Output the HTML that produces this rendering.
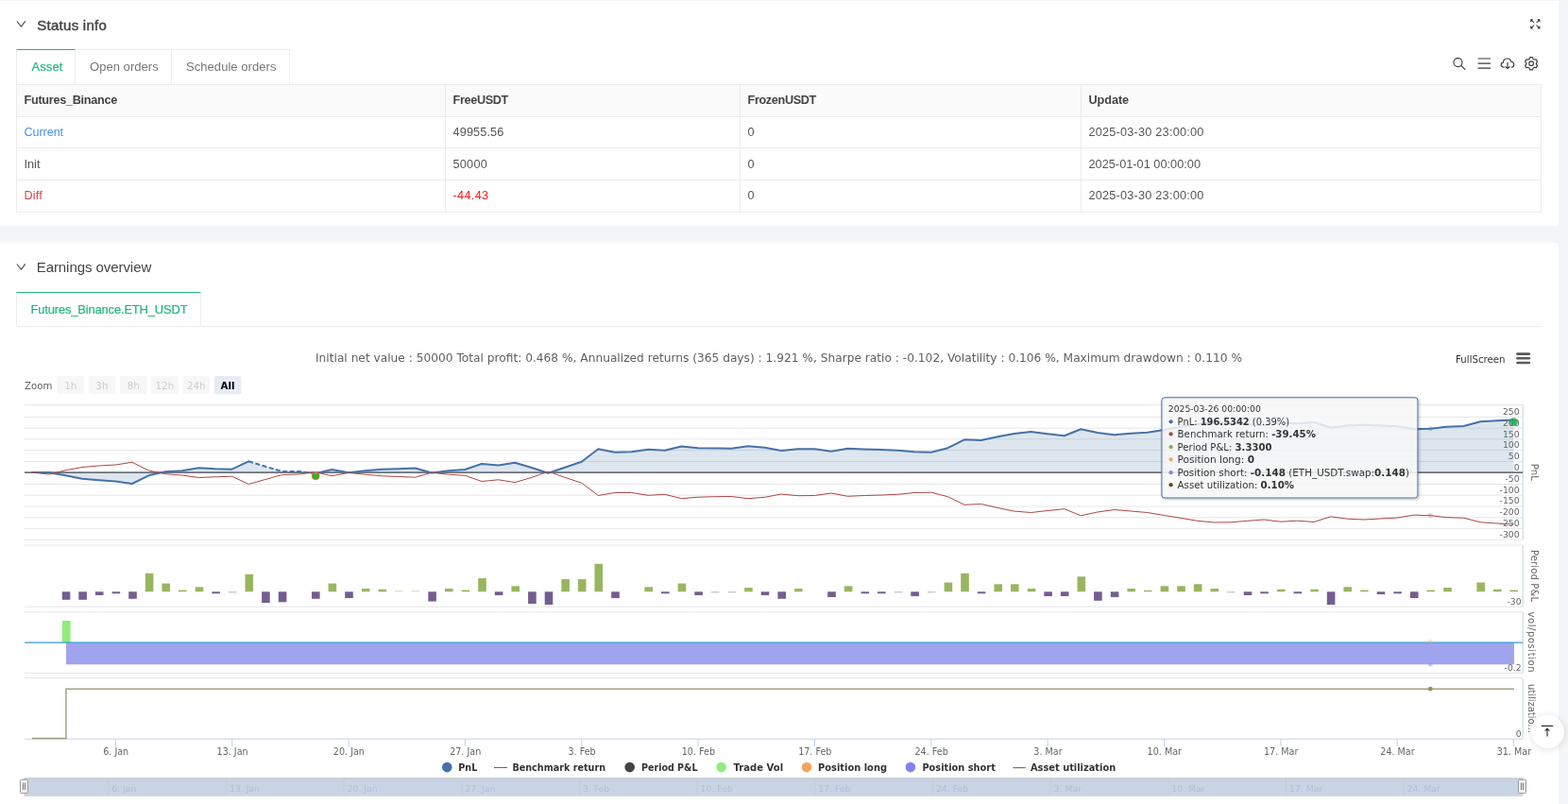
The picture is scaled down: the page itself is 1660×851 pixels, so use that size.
<!DOCTYPE html>
<html lang="en"><head><meta charset="utf-8"><title>Backtest</title>
<style>
html,body{margin:0;padding:0}
body{width:1660px;height:851px;overflow:hidden;background:#f4f5f7;font-family:"Liberation Sans", sans-serif;color:#444;position:relative}
.panel{position:absolute;left:0;width:1650px;background:#fff}
.t{position:absolute;white-space:nowrap;line-height:1}
.h{font-size:15px;font-weight:normal;color:#464646;-webkit-text-stroke:0.45px #464646}
.tab{position:absolute;box-sizing:border-box;border:1px solid #ededed;border-left:none;background:#fff;height:37.5px}
.tab.first{border-left:1px solid #ebebeb}
.tab.on{border-top:1.5px solid #1fb57a;border-bottom-color:#fff}
.tab span{position:absolute;top:10.5px;font-size:13px;color:#777;white-space:nowrap;line-height:14px}
.tab.on span{color:#22b57d;-webkit-text-stroke:0.2px #22b57d}
table{position:absolute;left:17px;top:89px;border-collapse:collapse;table-layout:fixed;width:1615px}
td,th{border:1px solid #ebebeb;font-size:12.7px;text-align:left;padding:0 0 0 7.5px;white-space:nowrap;color:#555;font-weight:normal;line-height:14px}
th{background:#fafafa;font-weight:bold;color:#444;height:32px;padding-bottom:1px}
td{height:32px}
tr.r2 td{height:33px}
tr.r3 td{height:32.5px}
svg text{font-family:"DejaVu Sans", "Liberation Sans", sans-serif}
#h1{letter-spacing:0.283px}
#tb1{letter-spacing:0.077px}
#tb2{letter-spacing:0.039px}
#tb3{letter-spacing:0.055px}
#c00{letter-spacing:-0.296px}
#c01{letter-spacing:-0.355px}
#c02{letter-spacing:-0.362px}
#c03{letter-spacing:-0.083px}
#c10{letter-spacing:-0.116px}
#c20{letter-spacing:0.016px}
#c30{letter-spacing:0.172px}
#c11{letter-spacing:0.135px}
#c21{letter-spacing:0.244px}
#c31{letter-spacing:0.336px}
#c13{letter-spacing:0.220px}
#c23{letter-spacing:0.036px}
#c33{letter-spacing:0.220px}
#h2{letter-spacing:-0.062px}
#tb4{letter-spacing:-0.188px}
</style></head><body>
<div id="root" style="position:absolute;left:0;top:0;width:1660px;height:851px;will-change:transform">
<div class="panel" style="top:1px;height:238px"></div>
<div class="panel" style="top:257px;height:600px"></div>

<svg class="t" style="left:16px;top:19px" width="13" height="13" viewBox="0 0 13 13"><path d="M1.9 3.5 L6.4 9.1 L10.8 3.4" fill="none" stroke="#444" stroke-width="1.05"/></svg>
<div class="t h" id="h1" style="left:39.2px;top:18.6px">Status info</div>

<div class="tab first on" style="left:17px;top:52px;width:63px"><span style="left:15.5px;top:11px" id="tb1">Asset</span></div>
<div class="tab" style="left:80px;top:52px;width:102px"><span style="left:15px" id="tb2">Open orders</span></div>
<div class="tab" style="left:182px;top:52px;width:125px"><span style="left:15px" id="tb3">Schedule orders</span></div>

<table>
<colgroup><col style="width:454px"><col style="width:312px"><col style="width:361px"><col style="width:487px"></colgroup>
<tr><th><span id="c00">Futures_Binance</span></th><th><span id="c01">FreeUSDT</span></th><th><span id="c02">FrozenUSDT</span></th><th><span id="c03">Update</span></th></tr>
<tr><td style="color:#4a92e6"><span id="c10">Current</span></td><td><span id="c11">49955.56</span></td><td>0</td><td><span id="c13">2025-03-30 23:00:00</span></td></tr>
<tr class="r2"><td><span id="c20">Init</span></td><td><span id="c21">50000</span></td><td>0</td><td><span id="c23">2025-01-01 00:00:00</span></td></tr>
<tr class="r3"><td style="color:#d2483f"><span id="c30">Diff</span></td><td style="color:#ff1616"><span id="c31">-44.43</span></td><td>0</td><td><span id="c33">2025-03-30 23:00:00</span></td></tr>
</table>

<svg class="t" style="left:1535px;top:14px" width="100" height="66" viewBox="1535 14 100 66" fill="none" stroke="#3a3a3a" stroke-width="1.15" stroke-linecap="round" stroke-linejoin="round">
<!-- collapse -->
<g stroke-width="1.05"><path d="M1623.8 23.8 L1620.8 20.8 M1620.7 22.6 v-1.9 h1.9"/><path d="M1626.9 23.8 L1629.9 20.8 M1628.1 20.7 h1.9 v1.9"/><path d="M1623.8 26.9 L1620.8 29.9 M1620.7 28.1 v1.9 h1.9"/><path d="M1626.9 26.9 L1629.9 29.9 M1628.1 30 h1.9 v-1.9"/></g>
<!-- search -->
<circle cx="1543.5" cy="66.1" r="4.5"/><path d="M1546.8 69.4 L1551 73.3"/>
<!-- menu -->
<path d="M1565 62 h12.6 M1565 67.1 h12.6 M1565 72.1 h12.6"/>
<!-- cloud -->
<path d="M1592.3 71.2 c-3.6 0 -4.3 -4.3 -0.9 -5.1 c0.4 -5.2 7.6 -5.4 8.4 -0.8 c4 0.3 3.8 5.4 0.4 5.9"/><path d="M1596 66.2 v6.4 M1593.9 70.6 l2.1 2.1 l2.1 -2.1"/>
<!-- gear -->
<circle cx="1621.1" cy="67.2" r="2.3"/>
<path d="M1619.7 60.6 h2.8 l0.5 1.7 l1.5 0.9 l1.7 -0.5 l1.4 2.4 l-1.2 1.3 v1.7 l1.2 1.3 l-1.4 2.4 l-1.7 -0.5 l-1.5 0.9 l-0.5 1.7 h-2.8 l-0.5 -1.7 l-1.5 -0.9 l-1.7 0.5 l-1.4 -2.4 l1.2 -1.3 v-1.7 l-1.2 -1.3 l1.4 -2.4 l1.7 0.5 l1.5 -0.9 z"/>
</svg>

<svg class="t" style="left:16px;top:275.5px" width="13" height="13" viewBox="0 0 13 13"><path d="M1.9 3.5 L6.4 9.1 L10.8 3.4" fill="none" stroke="#444" stroke-width="1.05"/></svg>
<div class="t h" id="h2" style="left:38.7px;top:275.2px;font-weight:normal;color:#444;-webkit-text-stroke:0">Earnings overview</div>
<div style="position:absolute;left:17px;top:345px;width:1615px;height:1px;background:#ebebeb"></div>
<div class="tab first on" style="left:17px;top:308.5px;width:196px;height:37.5px;border-bottom-color:#ebebeb"><span style="left:14.5px;top:11px" id="tb4">Futures_Binance.ETH_USDT</span></div>

<svg class="t" style="left:0;top:0;will-change:transform" width="1660" height="851" viewBox="0 0 1660 851">
<line x1="26" x2="1612" y1="428.5" y2="428.5" stroke="#e6e6e6" stroke-width="1"/>
<line x1="26" x2="1612" y1="441.4" y2="441.4" stroke="#e6e6e6" stroke-width="1"/>
<line x1="26" x2="1612" y1="453.2" y2="453.2" stroke="#e6e6e6" stroke-width="1"/>
<line x1="26" x2="1612" y1="464.8" y2="464.8" stroke="#e6e6e6" stroke-width="1"/>
<line x1="26" x2="1612" y1="476.6" y2="476.6" stroke="#e6e6e6" stroke-width="1"/>
<line x1="26" x2="1612" y1="488.5" y2="488.5" stroke="#e6e6e6" stroke-width="1"/>
<line x1="26" x2="1612" y1="512.5" y2="512.5" stroke="#e6e6e6" stroke-width="1"/>
<line x1="26" x2="1612" y1="524.2" y2="524.2" stroke="#e6e6e6" stroke-width="1"/>
<line x1="26" x2="1612" y1="536.0" y2="536.0" stroke="#e6e6e6" stroke-width="1"/>
<line x1="26" x2="1612" y1="547.8" y2="547.8" stroke="#e6e6e6" stroke-width="1"/>
<line x1="26" x2="1612" y1="559.5" y2="559.5" stroke="#e6e6e6" stroke-width="1"/>
<line x1="26" x2="1612" y1="571.3" y2="571.3" stroke="#e6e6e6" stroke-width="1"/>
<line x1="26" x2="1612" y1="577" y2="577" stroke="#e6e6e6" stroke-width="1"/>
<line x1="26" x2="1612" y1="642.25" y2="642.25" stroke="#e6e6e6" stroke-width="1"/>
<line x1="26" x2="1612" y1="647.75" y2="647.75" stroke="#e6e6e6" stroke-width="1"/>
<line x1="26" x2="1612" y1="712.6" y2="712.6" stroke="#e6e6e6" stroke-width="1"/>
<line x1="26" x2="1612" y1="717.6" y2="717.6" stroke="#e6e6e6" stroke-width="1"/>
<line x1="1612.2" x2="1612.2" y1="428.5" y2="571" stroke="#c4cfe9" stroke-width="1"/>
<line x1="1612.2" x2="1612.2" y1="577" y2="642.25" stroke="#c4cfe9" stroke-width="1"/>
<line x1="1612.2" x2="1612.2" y1="647.75" y2="712.6" stroke="#c4cfe9" stroke-width="1"/>
<line x1="1612.2" x2="1612.2" y1="717.6" y2="782" stroke="#c4cfe9" stroke-width="1"/>
<line x1="26" x2="1612" y1="782.2" y2="782.2" stroke="#c4cfe9" stroke-width="1"/>
<line x1="122.4" x2="122.4" y1="782.2" y2="790.2" stroke="#c4cfe9" stroke-width="1"/>
<text x="122.7" y="799.0" text-anchor="middle" font-size="9.6" fill="#666">6. Jan</text>
<line x1="245.8" x2="245.8" y1="782.2" y2="790.2" stroke="#c4cfe9" stroke-width="1"/>
<text x="246.1" y="799.0" text-anchor="middle" font-size="9.6" fill="#666">13. Jan</text>
<line x1="369.1" x2="369.1" y1="782.2" y2="790.2" stroke="#c4cfe9" stroke-width="1"/>
<text x="369.4" y="799.0" text-anchor="middle" font-size="9.6" fill="#666">20. Jan</text>
<line x1="492.4" x2="492.4" y1="782.2" y2="790.2" stroke="#c4cfe9" stroke-width="1"/>
<text x="492.7" y="799.0" text-anchor="middle" font-size="9.6" fill="#666">27. Jan</text>
<line x1="615.8" x2="615.8" y1="782.2" y2="790.2" stroke="#c4cfe9" stroke-width="1"/>
<text x="616.1" y="799.0" text-anchor="middle" font-size="9.6" fill="#666">3. Feb</text>
<line x1="739.1" x2="739.1" y1="782.2" y2="790.2" stroke="#c4cfe9" stroke-width="1"/>
<text x="739.4" y="799.0" text-anchor="middle" font-size="9.6" fill="#666">10. Feb</text>
<line x1="862.5" x2="862.5" y1="782.2" y2="790.2" stroke="#c4cfe9" stroke-width="1"/>
<text x="862.8" y="799.0" text-anchor="middle" font-size="9.6" fill="#666">17. Feb</text>
<line x1="985.8" x2="985.8" y1="782.2" y2="790.2" stroke="#c4cfe9" stroke-width="1"/>
<text x="986.1" y="799.0" text-anchor="middle" font-size="9.6" fill="#666">24. Feb</text>
<line x1="1109.2" x2="1109.2" y1="782.2" y2="790.2" stroke="#c4cfe9" stroke-width="1"/>
<text x="1109.5" y="799.0" text-anchor="middle" font-size="9.6" fill="#666">3. Mar</text>
<line x1="1232.5" x2="1232.5" y1="782.2" y2="790.2" stroke="#c4cfe9" stroke-width="1"/>
<text x="1232.8" y="799.0" text-anchor="middle" font-size="9.6" fill="#666">10. Mar</text>
<line x1="1355.9" x2="1355.9" y1="782.2" y2="790.2" stroke="#c4cfe9" stroke-width="1"/>
<text x="1356.2" y="799.0" text-anchor="middle" font-size="9.6" fill="#666">17. Mar</text>
<line x1="1479.2" x2="1479.2" y1="782.2" y2="790.2" stroke="#c4cfe9" stroke-width="1"/>
<text x="1479.5" y="799.0" text-anchor="middle" font-size="9.6" fill="#666">24. Mar</text>
<line x1="1602.6" x2="1602.6" y1="782.2" y2="790.2" stroke="#c4cfe9" stroke-width="1"/>
<text x="1602.9" y="799.0" text-anchor="middle" font-size="9.6" fill="#666">31. Mar</text>
<line x1="26" x2="1612" y1="500.1" y2="500.1" stroke="#6f7276" stroke-width="1.9"/>
<path d="M34.1 500.0 L51.8 500.2 L69.4 503.3 L87.0 506.8 L104.6 508.3 L122.3 509.5 L139.9 512.0 L157.5 503.3 L175.1 499.2 L192.7 498.3 L210.4 495.3 L228.0 496.2 L245.6 496.7 L263.2 488.3 L280.9 493.8 L298.5 498.9 L316.1 498.9 L333.7 501.2 L351.3 497.0 L369.0 500.3 L386.6 498.3 L404.2 496.8 L421.8 496.2 L439.5 495.5 L457.1 500.5 L474.7 498.3 L492.3 497.0 L509.9 491.0 L527.6 492.5 L545.2 489.8 L562.8 495.0 L580.4 500.8 L598.1 494.7 L615.7 488.8 L633.3 475.3 L650.9 478.7 L668.5 478.3 L686.2 475.7 L703.8 476.8 L721.4 472.5 L739.0 474.3 L756.7 474.5 L774.3 474.7 L791.9 472.3 L809.5 473.8 L827.1 477.0 L844.8 475.2 L862.4 475.3 L880.0 477.7 L897.6 474.7 L915.2 475.5 L932.9 476.0 L950.5 476.7 L968.1 478.3 L985.7 478.7 L1003.4 474.2 L1021.0 465.3 L1038.6 466.0 L1056.2 462.3 L1073.8 459.0 L1091.5 457.0 L1109.1 459.2 L1126.7 461.2 L1144.3 454.2 L1162.0 458.0 L1179.6 460.3 L1197.2 458.8 L1214.8 457.7 L1232.4 455.0 L1250.1 451.8 L1267.7 449.0 L1285.3 447.3 L1302.9 447.5 L1320.6 449.0 L1338.2 450.3 L1355.8 447.5 L1373.4 448.3 L1391.0 446.7 L1408.7 452.7 L1426.3 450.5 L1443.9 449.7 L1461.5 450.5 L1479.2 451.3 L1496.8 454.3 L1514.4 453.7 L1532.0 451.7 L1549.6 451.0 L1567.3 446.3 L1584.9 445.3 L1602.5 444.5 L1602.5 500 L34 500 Z" fill="#4572A7" fill-opacity="0.18"/>
<path d="M34.1 500.0 L51.8 500.2 L69.4 503.3 L87.0 506.8 L104.6 508.3 L122.3 509.5 L139.9 512.0 L157.5 503.3 L175.1 499.2 L192.7 498.3 L210.4 495.3 L228.0 496.2 L245.6 496.7 L263.2 488.3" fill="none" stroke="#4572A7" stroke-width="2" stroke-linejoin="round" stroke-linecap="round"/>
<path d="M263.2 488.3 L280.9 493.8 L298.5 498.9 L316.1 498.9 L333.7 501.2" fill="none" stroke="#4572A7" stroke-width="2" stroke-dasharray="5 2.5"/>
<path d="M333.7 501.2 L351.3 497.0 L369.0 500.3 L386.6 498.3 L404.2 496.8 L421.8 496.2 L439.5 495.5 L457.1 500.5 L474.7 498.3 L492.3 497.0 L509.9 491.0 L527.6 492.5 L545.2 489.8 L562.8 495.0 L580.4 500.8 L598.1 494.7 L615.7 488.8 L633.3 475.3 L650.9 478.7 L668.5 478.3 L686.2 475.7 L703.8 476.8 L721.4 472.5 L739.0 474.3 L756.7 474.5 L774.3 474.7 L791.9 472.3 L809.5 473.8 L827.1 477.0 L844.8 475.2 L862.4 475.3 L880.0 477.7 L897.6 474.7 L915.2 475.5 L932.9 476.0 L950.5 476.7 L968.1 478.3 L985.7 478.7 L1003.4 474.2 L1021.0 465.3 L1038.6 466.0 L1056.2 462.3 L1073.8 459.0 L1091.5 457.0 L1109.1 459.2 L1126.7 461.2 L1144.3 454.2 L1162.0 458.0 L1179.6 460.3 L1197.2 458.8 L1214.8 457.7 L1232.4 455.0 L1250.1 451.8 L1267.7 449.0 L1285.3 447.3 L1302.9 447.5 L1320.6 449.0 L1338.2 450.3 L1355.8 447.5 L1373.4 448.3 L1391.0 446.7 L1408.7 452.7 L1426.3 450.5 L1443.9 449.7 L1461.5 450.5 L1479.2 451.3 L1496.8 454.3 L1514.4 453.7 L1532.0 451.7 L1549.6 451.0 L1567.3 446.3 L1584.9 445.3 L1602.5 444.5" fill="none" stroke="#4572A7" stroke-width="2" stroke-linejoin="round" stroke-linecap="round"/>
<path d="M34.1 500.0 L51.8 502.0 L69.4 497.8 L87.0 494.5 L104.6 493.0 L122.3 492.0 L139.9 489.3 L157.5 498.0 L175.1 501.7 L192.7 503.0 L210.4 505.5 L228.0 504.8 L245.6 504.2 L263.2 512.5 L280.9 507.5 L298.5 502.6 L316.1 502.0 L333.7 499.8 L351.3 503.7 L369.0 500.5 L386.6 502.2 L404.2 503.8 L421.8 504.5 L439.5 505.2 L457.1 500.3 L474.7 502.2 L492.3 503.3 L509.9 509.5 L527.6 507.8 L545.2 510.6 L562.8 505.4 L580.4 499.2 L598.1 505.3 L615.7 511.2 L633.3 524.5 L650.9 521.5 L668.5 521.5 L686.2 524.3 L703.8 523.3 L721.4 527.7 L739.0 526.2 L756.7 525.7 L774.3 525.5 L791.9 527.7 L809.5 526.3 L827.1 523.0 L844.8 524.7 L862.4 524.5 L880.0 522.0 L897.6 525.3 L915.2 524.5 L932.9 524.0 L950.5 523.3 L968.1 521.5 L985.7 521.2 L1003.4 525.7 L1021.0 534.3 L1038.6 533.5 L1056.2 537.5 L1073.8 541.1 L1091.5 542.5 L1109.1 540.5 L1126.7 538.7 L1144.3 545.8 L1162.0 542.0 L1179.6 539.5 L1197.2 541.0 L1214.8 542.5 L1232.4 545.5 L1250.1 548.3 L1267.7 551.3 L1285.3 553.0 L1302.9 552.8 L1320.6 551.3 L1338.2 550.0 L1355.8 552.2 L1373.4 551.2 L1391.0 552.5 L1408.7 546.8 L1426.3 549.2 L1443.9 550.0 L1461.5 549.0 L1479.2 548.0 L1496.8 545.2 L1514.4 545.7 L1532.0 547.7 L1549.6 548.2 L1567.3 552.8 L1584.9 554.0 L1602.5 555.0" fill="none" stroke="#AA4643" stroke-width="1" stroke-linejoin="round"/>
<circle cx="334.2" cy="503.8" r="4.6" fill="#f58a78" fill-opacity="0.35"/>
<circle cx="334.2" cy="503.8" r="3.9" fill="#0fbf12" stroke="#e8795c" stroke-width="0.7"/>
<path d="M334.3 500.6 L334.3 507.4" stroke="#e8734e" stroke-width="0.8" fill="none"/><path d="M334.3 500.8 L334.3 502.8" stroke="#f0704e" stroke-width="1.5" stroke-linecap="round" fill="none"/>
<text x="1608.7" y="439.1" text-anchor="end" font-size="9.3" fill="#666">250</text>
<text x="1608.7" y="450.9" text-anchor="end" font-size="9.3" fill="#666">200</text>
<text x="1608.7" y="462.6" text-anchor="end" font-size="9.3" fill="#666">150</text>
<text x="1608.7" y="474.4" text-anchor="end" font-size="9.3" fill="#666">100</text>
<text x="1608.7" y="486.2" text-anchor="end" font-size="9.3" fill="#666">50</text>
<text x="1608.7" y="497.9" text-anchor="end" font-size="9.3" fill="#666">0</text>
<text x="1608.7" y="509.7" text-anchor="end" font-size="9.3" fill="#666">-50</text>
<text x="1608.7" y="521.5" text-anchor="end" font-size="9.3" fill="#666">-100</text>
<text x="1608.7" y="533.2" text-anchor="end" font-size="9.3" fill="#666">-150</text>
<text x="1608.7" y="545.0" text-anchor="end" font-size="9.3" fill="#666">-200</text>
<text x="1608.7" y="556.8" text-anchor="end" font-size="9.3" fill="#666">-250</text>
<text x="1608.7" y="568.6" text-anchor="end" font-size="9.3" fill="#666">-300</text>
<circle cx="1602.5" cy="446.6" r="4.4" fill="#19a84a" fill-opacity="0.78"/>
<text transform="translate(1620.5 499.8) rotate(90)" text-anchor="middle" font-size="10" fill="#666" textLength="18" lengthAdjust="spacingAndGlyphs">PnL</text>
<rect x="65.7" y="626.30" width="8.6" height="8.50" fill="#755d90" fill-opacity="1"/>
<rect x="83.3" y="626.30" width="8.6" height="8.50" fill="#755d90" fill-opacity="1"/>
<rect x="100.9" y="626.30" width="8.6" height="3.75" fill="#755d90" fill-opacity="1"/>
<rect x="118.6" y="626.30" width="8.6" height="2.00" fill="#755d90" fill-opacity="1"/>
<rect x="136.2" y="626.30" width="8.6" height="7.50" fill="#755d90" fill-opacity="1"/>
<rect x="153.8" y="606.80" width="8.6" height="19.50" fill="#98b660" fill-opacity="1"/>
<rect x="171.4" y="617.55" width="8.6" height="8.75" fill="#98b660" fill-opacity="1"/>
<rect x="189.0" y="624.55" width="8.6" height="1.75" fill="#98b660" fill-opacity="1"/>
<rect x="206.7" y="621.30" width="8.6" height="5.00" fill="#98b660" fill-opacity="1"/>
<rect x="224.3" y="626.30" width="8.6" height="2.00" fill="#755d90" fill-opacity="1"/>
<rect x="241.9" y="626.30" width="8.6" height="1.00" fill="#755d90" fill-opacity="0.5"/>
<rect x="259.5" y="607.80" width="8.6" height="18.50" fill="#98b660" fill-opacity="1"/>
<rect x="277.1" y="626.30" width="8.6" height="11.75" fill="#755d90" fill-opacity="1"/>
<rect x="294.8" y="626.30" width="8.6" height="11.00" fill="#755d90" fill-opacity="1"/>
<rect x="330.0" y="626.30" width="8.6" height="7.50" fill="#755d90" fill-opacity="1"/>
<rect x="347.6" y="617.55" width="8.6" height="8.75" fill="#98b660" fill-opacity="1"/>
<rect x="365.2" y="626.30" width="8.6" height="6.75" fill="#755d90" fill-opacity="1"/>
<rect x="382.9" y="623.05" width="8.6" height="3.25" fill="#98b660" fill-opacity="1"/>
<rect x="400.5" y="623.80" width="8.6" height="2.50" fill="#98b660" fill-opacity="1"/>
<rect x="418.1" y="625.30" width="8.6" height="1.00" fill="#98b660" fill-opacity="0.5"/>
<rect x="435.7" y="625.30" width="8.6" height="1.00" fill="#98b660" fill-opacity="0.5"/>
<rect x="453.3" y="626.30" width="8.6" height="10.25" fill="#755d90" fill-opacity="1"/>
<rect x="471.0" y="623.05" width="8.6" height="3.25" fill="#98b660" fill-opacity="1"/>
<rect x="488.6" y="624.55" width="8.6" height="1.75" fill="#98b660" fill-opacity="1"/>
<rect x="506.2" y="612.05" width="8.6" height="14.25" fill="#98b660" fill-opacity="1"/>
<rect x="523.8" y="626.30" width="8.6" height="3.75" fill="#755d90" fill-opacity="1"/>
<rect x="541.4" y="620.30" width="8.6" height="6.00" fill="#98b660" fill-opacity="1"/>
<rect x="559.1" y="626.30" width="8.6" height="12.75" fill="#755d90" fill-opacity="1"/>
<rect x="576.7" y="626.30" width="8.6" height="13.75" fill="#755d90" fill-opacity="1"/>
<rect x="594.3" y="613.05" width="8.6" height="13.25" fill="#98b660" fill-opacity="1"/>
<rect x="611.9" y="613.05" width="8.6" height="13.25" fill="#98b660" fill-opacity="1"/>
<rect x="629.5" y="596.80" width="8.6" height="29.50" fill="#98b660" fill-opacity="1"/>
<rect x="647.2" y="626.30" width="8.6" height="6.75" fill="#755d90" fill-opacity="1"/>
<rect x="682.4" y="621.30" width="8.6" height="5.00" fill="#98b660" fill-opacity="1"/>
<rect x="700.0" y="626.30" width="8.6" height="2.00" fill="#755d90" fill-opacity="1"/>
<rect x="717.6" y="617.55" width="8.6" height="8.75" fill="#98b660" fill-opacity="1"/>
<rect x="735.3" y="626.30" width="8.6" height="3.75" fill="#755d90" fill-opacity="1"/>
<rect x="752.9" y="626.30" width="8.6" height="1.00" fill="#755d90" fill-opacity="0.5"/>
<rect x="770.5" y="626.30" width="8.6" height="1.00" fill="#755d90" fill-opacity="0.5"/>
<rect x="788.1" y="622.05" width="8.6" height="4.25" fill="#98b660" fill-opacity="1"/>
<rect x="805.7" y="626.30" width="8.6" height="3.75" fill="#755d90" fill-opacity="1"/>
<rect x="823.4" y="626.30" width="8.6" height="7.50" fill="#755d90" fill-opacity="1"/>
<rect x="841.0" y="623.05" width="8.6" height="3.25" fill="#98b660" fill-opacity="1"/>
<rect x="876.2" y="626.30" width="8.6" height="5.75" fill="#755d90" fill-opacity="1"/>
<rect x="893.8" y="620.30" width="8.6" height="6.00" fill="#98b660" fill-opacity="1"/>
<rect x="911.5" y="626.30" width="8.6" height="2.00" fill="#755d90" fill-opacity="1"/>
<rect x="929.1" y="626.30" width="8.6" height="2.00" fill="#755d90" fill-opacity="1"/>
<rect x="946.7" y="626.30" width="8.6" height="1.00" fill="#755d90" fill-opacity="0.5"/>
<rect x="964.3" y="626.30" width="8.6" height="4.75" fill="#755d90" fill-opacity="1"/>
<rect x="981.9" y="626.30" width="8.6" height="1.00" fill="#755d90" fill-opacity="0.5"/>
<rect x="999.6" y="616.55" width="8.6" height="9.75" fill="#98b660" fill-opacity="1"/>
<rect x="1017.2" y="606.80" width="8.6" height="19.50" fill="#98b660" fill-opacity="1"/>
<rect x="1034.8" y="626.30" width="8.6" height="2.00" fill="#755d90" fill-opacity="1"/>
<rect x="1052.4" y="618.30" width="8.6" height="8.00" fill="#98b660" fill-opacity="1"/>
<rect x="1070.0" y="618.30" width="8.6" height="8.00" fill="#98b660" fill-opacity="1"/>
<rect x="1087.7" y="623.05" width="8.6" height="3.25" fill="#98b660" fill-opacity="1"/>
<rect x="1105.3" y="626.30" width="8.6" height="4.75" fill="#755d90" fill-opacity="1"/>
<rect x="1122.9" y="626.30" width="8.6" height="4.75" fill="#755d90" fill-opacity="1"/>
<rect x="1140.5" y="610.30" width="8.6" height="16.00" fill="#98b660" fill-opacity="1"/>
<rect x="1158.1" y="626.30" width="8.6" height="9.50" fill="#755d90" fill-opacity="1"/>
<rect x="1175.8" y="626.30" width="8.6" height="5.75" fill="#755d90" fill-opacity="1"/>
<rect x="1193.4" y="623.05" width="8.6" height="3.25" fill="#98b660" fill-opacity="1"/>
<rect x="1211.0" y="624.80" width="8.6" height="1.50" fill="#98b660" fill-opacity="1"/>
<rect x="1228.6" y="620.30" width="8.6" height="6.00" fill="#98b660" fill-opacity="1"/>
<rect x="1246.2" y="620.30" width="8.6" height="6.00" fill="#98b660" fill-opacity="1"/>
<rect x="1263.9" y="618.30" width="8.6" height="8.00" fill="#98b660" fill-opacity="1"/>
<rect x="1281.5" y="623.05" width="8.6" height="3.25" fill="#98b660" fill-opacity="1"/>
<rect x="1299.1" y="626.30" width="8.6" height="1.00" fill="#755d90" fill-opacity="0.5"/>
<rect x="1316.7" y="626.30" width="8.6" height="3.75" fill="#755d90" fill-opacity="1"/>
<rect x="1334.3" y="626.30" width="8.6" height="2.00" fill="#755d90" fill-opacity="1"/>
<rect x="1352.0" y="623.80" width="8.6" height="2.50" fill="#98b660" fill-opacity="1"/>
<rect x="1369.6" y="626.30" width="8.6" height="2.00" fill="#755d90" fill-opacity="1"/>
<rect x="1387.2" y="623.80" width="8.6" height="2.50" fill="#98b660" fill-opacity="1"/>
<rect x="1404.8" y="626.30" width="8.6" height="13.75" fill="#755d90" fill-opacity="1"/>
<rect x="1422.4" y="621.30" width="8.6" height="5.00" fill="#98b660" fill-opacity="1"/>
<rect x="1440.1" y="624.55" width="8.6" height="1.75" fill="#98b660" fill-opacity="1"/>
<rect x="1457.7" y="626.30" width="8.6" height="2.75" fill="#755d90" fill-opacity="1"/>
<rect x="1475.3" y="626.30" width="8.6" height="2.00" fill="#755d90" fill-opacity="1"/>
<rect x="1492.9" y="626.30" width="8.6" height="6.75" fill="#755d90" fill-opacity="1"/>
<rect x="1510.5" y="624.55" width="8.6" height="1.75" fill="#98b660" fill-opacity="1"/>
<rect x="1528.2" y="622.05" width="8.6" height="4.25" fill="#98b660" fill-opacity="1"/>
<rect x="1563.4" y="616.55" width="8.6" height="9.75" fill="#98b660" fill-opacity="1"/>
<rect x="1581.0" y="623.80" width="8.6" height="2.50" fill="#98b660" fill-opacity="1"/>
<rect x="1598.6" y="624.55" width="8.4" height="1.75" fill="#98b660" fill-opacity="1"/>
<text x="1610.7" y="640.4" text-anchor="end" font-size="9.3" fill="#666">-30</text>
<text transform="translate(1620.5 609.5) rotate(90)" text-anchor="middle" font-size="10" fill="#666" textLength="55" lengthAdjust="spacing">Period P&amp;L</text>
<rect x="65.8" y="657" width="8.8" height="23" fill="#90ed7d"/>
<rect x="70" y="680.3" width="1533" height="23" fill="#8085e9" fill-opacity="0.75"/>
<line x1="26" x2="1612" y1="680.1" y2="680.1" stroke="#3597d6" stroke-width="1.2"/>
<text x="1610.7" y="710.3" text-anchor="end" font-size="9.3" fill="#666">-0.2</text>
<text transform="translate(1617.6 679.5) rotate(90)" text-anchor="middle" font-size="10" fill="#666" textLength="64" lengthAdjust="spacing">vol/position</text>
<path d="M34 781.6 L69.95 781.6 L69.95 729.15 L1603 729.15" fill="none" stroke="#7f7848" stroke-opacity="0.7" stroke-width="1.5"/>
<text x="1610.7" y="779.5" text-anchor="end" font-size="9.3" fill="#666">0</text>
<text transform="translate(1617.6 750) rotate(90)" text-anchor="middle" font-size="10" fill="#666" textLength="52" lengthAdjust="spacing">utilizatio...</text>
<circle cx="1514.3" cy="453.7" r="2.6" fill="#4572A7" fill-opacity="0.25"/>
<circle cx="1514.3" cy="545.6" r="2.6" fill="#AA4643" fill-opacity="0.25"/>
<circle cx="1514.3" cy="679.3" r="2.4" fill="#f7a35c" fill-opacity="0.35"/>
<circle cx="1514.3" cy="703.3" r="2.4" fill="#8085e9" fill-opacity="0.4"/>
<circle cx="1514.3" cy="729.15" r="2.4" fill="#9a9066"/>
<circle cx="473.3" cy="812.1" r="5.3" fill="#4572A7"/>
<text x="485.3" y="815.7" font-size="9.6" font-weight="bold" fill="#333" textLength="20" lengthAdjust="spacingAndGlyphs">PnL</text>
<line x1="523" x2="537" y1="812.5" y2="812.5" stroke="#AA4643" stroke-width="1"/>
<text x="542.4" y="815.7" font-size="9.6" font-weight="bold" fill="#333" textLength="98.6" lengthAdjust="spacingAndGlyphs">Benchmark return</text>
<circle cx="666.7" cy="812.1" r="5.3" fill="#434348"/>
<text x="679" y="815.7" font-size="9.6" font-weight="bold" fill="#333" textLength="59.5" lengthAdjust="spacingAndGlyphs">Period P&amp;L</text>
<circle cx="763.6" cy="812.1" r="5.3" fill="#90ed7d"/>
<text x="776.6" y="815.7" font-size="9.6" font-weight="bold" fill="#333" textLength="52.5" lengthAdjust="spacingAndGlyphs">Trade Vol</text>
<circle cx="854" cy="812.1" r="5.3" fill="#f7a35c"/>
<text x="866" y="815.7" font-size="9.6" font-weight="bold" fill="#333" textLength="73" lengthAdjust="spacingAndGlyphs">Position long</text>
<circle cx="963.9" cy="812.1" r="5.3" fill="#8085e9"/>
<text x="976.4" y="815.7" font-size="9.6" font-weight="bold" fill="#333" textLength="77.5" lengthAdjust="spacingAndGlyphs">Position short</text>
<line x1="1072.3" x2="1085.8" y1="812.55" y2="812.55" stroke="#8a7a3c" stroke-width="1.3"/>
<text x="1091" y="815.7" font-size="9.6" font-weight="bold" fill="#333" textLength="90.2" lengthAdjust="spacingAndGlyphs">Asset utilization</text>
<rect x="25.5" y="823.3" width="1586.7" height="18.6" fill="#c8d4e4"/>
<line x1="25.5" x2="1612.2" y1="842.3" y2="842.3" stroke="#d4d6da" stroke-width="1.2"/>
<line x1="25.5" x2="1612.2" y1="823.8" y2="823.8" stroke="#c9ccd2" stroke-width="1.2"/>
<line x1="114.8" x2="114.8" y1="824.4" y2="841.7" stroke="#bfcadb" stroke-opacity="0.8" stroke-width="1"/>
<text x="118.2" y="837.8" font-size="9.3" fill="#b3c0d2">6. Jan</text>
<line x1="239.5" x2="239.5" y1="824.4" y2="841.7" stroke="#bfcadb" stroke-opacity="0.8" stroke-width="1"/>
<text x="242.9" y="837.8" font-size="9.3" fill="#b3c0d2">13. Jan</text>
<line x1="364.2" x2="364.2" y1="824.4" y2="841.7" stroke="#bfcadb" stroke-opacity="0.8" stroke-width="1"/>
<text x="367.6" y="837.8" font-size="9.3" fill="#b3c0d2">20. Jan</text>
<line x1="488.9" x2="488.9" y1="824.4" y2="841.7" stroke="#bfcadb" stroke-opacity="0.8" stroke-width="1"/>
<text x="492.3" y="837.8" font-size="9.3" fill="#b3c0d2">27. Jan</text>
<line x1="613.5" x2="613.5" y1="824.4" y2="841.7" stroke="#bfcadb" stroke-opacity="0.8" stroke-width="1"/>
<text x="616.9" y="837.8" font-size="9.3" fill="#b3c0d2">3. Feb</text>
<line x1="738.2" x2="738.2" y1="824.4" y2="841.7" stroke="#bfcadb" stroke-opacity="0.8" stroke-width="1"/>
<text x="741.6" y="837.8" font-size="9.3" fill="#b3c0d2">10. Feb</text>
<line x1="862.9" x2="862.9" y1="824.4" y2="841.7" stroke="#bfcadb" stroke-opacity="0.8" stroke-width="1"/>
<text x="866.3" y="837.8" font-size="9.3" fill="#b3c0d2">17. Feb</text>
<line x1="987.5" x2="987.5" y1="824.4" y2="841.7" stroke="#bfcadb" stroke-opacity="0.8" stroke-width="1"/>
<text x="990.9" y="837.8" font-size="9.3" fill="#b3c0d2">24. Feb</text>
<line x1="1112.2" x2="1112.2" y1="824.4" y2="841.7" stroke="#bfcadb" stroke-opacity="0.8" stroke-width="1"/>
<text x="1115.6" y="837.8" font-size="9.3" fill="#b3c0d2">3. Mar</text>
<line x1="1236.9" x2="1236.9" y1="824.4" y2="841.7" stroke="#bfcadb" stroke-opacity="0.8" stroke-width="1"/>
<text x="1240.3" y="837.8" font-size="9.3" fill="#b3c0d2">10. Mar</text>
<line x1="1361.5" x2="1361.5" y1="824.4" y2="841.7" stroke="#bfcadb" stroke-opacity="0.8" stroke-width="1"/>
<text x="1365.0" y="837.8" font-size="9.3" fill="#b3c0d2">17. Mar</text>
<line x1="1486.2" x2="1486.2" y1="824.4" y2="841.7" stroke="#bfcadb" stroke-opacity="0.8" stroke-width="1"/>
<text x="1489.6" y="837.8" font-size="9.3" fill="#b3c0d2">24. Mar</text>
<rect x="21.4" y="825.2" width="8" height="14.4" rx="1" fill="#f2f2f2" stroke="#999" stroke-width="1"/>
<line x1="24.4" x2="24.4" y1="828.6" y2="836" stroke="#555" stroke-width="0.8"/>
<line x1="26.4" x2="26.4" y1="828.6" y2="836" stroke="#555" stroke-width="0.8"/>
<rect x="1607.5" y="825.2" width="8" height="14.4" rx="1" fill="#f2f2f2" stroke="#999" stroke-width="1"/>
<line x1="1610.5" x2="1610.5" y1="828.6" y2="836" stroke="#555" stroke-width="0.8"/>
<line x1="1612.5" x2="1612.5" y1="828.6" y2="836" stroke="#555" stroke-width="0.8"/>
<text x="334" y="383" font-size="11.6" fill="#5e5e5e" textLength="981" lengthAdjust="spacingAndGlyphs">Initial net value : 50000 Total profit: 0.468 %, Annualized returns (365 days) : 1.921 %, Sharpe ratio : -0.102, Volatility : 0.106 %, Maximum drawdown : 0.110 %</text>
<text x="26" y="411.8" font-size="10.2" fill="#606060" textLength="29.3" lengthAdjust="spacingAndGlyphs">Zoom</text>
<rect x="60.4" y="398.1" width="28.6" height="19.2" rx="2" fill="#f7f7f7"/>
<text x="74.7" y="411.8" text-anchor="middle" font-size="10.3" fill="#ccc" font-weight="normal">1h</text>
<rect x="93.6" y="398.1" width="28.6" height="19.2" rx="2" fill="#f7f7f7"/>
<text x="107.89999999999999" y="411.8" text-anchor="middle" font-size="10.3" fill="#ccc" font-weight="normal">3h</text>
<rect x="126.9" y="398.1" width="28.6" height="19.2" rx="2" fill="#f7f7f7"/>
<text x="141.20000000000002" y="411.8" text-anchor="middle" font-size="10.3" fill="#ccc" font-weight="normal">8h</text>
<rect x="160.1" y="398.1" width="28.6" height="19.2" rx="2" fill="#f7f7f7"/>
<text x="174.4" y="411.8" text-anchor="middle" font-size="10.3" fill="#ccc" font-weight="normal">12h</text>
<rect x="193.5" y="398.1" width="28.6" height="19.2" rx="2" fill="#f7f7f7"/>
<text x="207.8" y="411.8" text-anchor="middle" font-size="10.3" fill="#ccc" font-weight="normal">24h</text>
<rect x="226.8" y="398.1" width="28.6" height="19.2" rx="2" fill="#e6ebf5"/>
<text x="241.10000000000002" y="411.8" text-anchor="middle" font-size="10.3" fill="#000" font-weight="bold">All</text>
<text x="1541" y="383.6" font-size="9.8" fill="#333" textLength="52.6" lengthAdjust="spacingAndGlyphs">FullScreen</text>
<line x1="1606.4" x2="1618.9" y1="374.6" y2="374.6" stroke="#5a5a5a" stroke-width="2.6" stroke-linecap="round"/>
<line x1="1606.4" x2="1618.9" y1="379.3" y2="379.3" stroke="#5a5a5a" stroke-width="2.6" stroke-linecap="round"/>
<line x1="1606.4" x2="1618.9" y1="384" y2="384" stroke="#5a5a5a" stroke-width="2.6" stroke-linecap="round"/>
<g><rect x="1230.9" y="421.8" width="271" height="106.2" rx="3" fill="none" stroke="#000" stroke-opacity="0.05" stroke-width="5"/><rect x="1230.9" y="421.8" width="271" height="106.2" rx="3" fill="none" stroke="#000" stroke-opacity="0.06" stroke-width="3"/><rect x="1230.9" y="421.8" width="271" height="106.2" rx="3" fill="none" stroke="#000" stroke-opacity="0.07" stroke-width="1"/><rect x="1229.9" y="420.8" width="271" height="106.2" rx="3" fill="#f7f7f7" fill-opacity="0.86" stroke="#4572A7" stroke-width="1"/></g>
<text x="1236.8" y="436.2" font-size="8.6" fill="#333" textLength="98" lengthAdjust="spacingAndGlyphs">2025-03-26 00:00:00</text>
<circle cx="1239.6" cy="446.3" r="2.1" fill="#4572A7"/>
<text x="1246.6" y="450.0" font-size="10.2" fill="#333" textLength="118.5" lengthAdjust="spacingAndGlyphs">PnL: <tspan font-weight="bold">196.5342</tspan> (0.39%)</text>
<circle cx="1239.6" cy="459.4" r="2.1" fill="#AA4643"/>
<text x="1246.6" y="463.1" font-size="10.2" fill="#333" textLength="146.4" lengthAdjust="spacingAndGlyphs">Benchmark return: <tspan font-weight="bold">-39.45%</tspan></text>
<circle cx="1239.6" cy="473.1" r="2.1" fill="#89A54E"/>
<text x="1246.6" y="476.8" font-size="10.2" fill="#333" textLength="99.9" lengthAdjust="spacingAndGlyphs">Period P&amp;L: <tspan font-weight="bold">3.3300</tspan></text>
<circle cx="1239.6" cy="486.3" r="2.1" fill="#f7a35c"/>
<text x="1246.6" y="490.0" font-size="10.2" fill="#333" textLength="81.4" lengthAdjust="spacingAndGlyphs">Position long: <tspan font-weight="bold">0</tspan></text>
<circle cx="1239.6" cy="500.2" r="2.1" fill="#8085e9"/>
<text x="1246.6" y="503.9" font-size="10.2" fill="#333" textLength="245.4" lengthAdjust="spacingAndGlyphs">Position short: <tspan font-weight="bold">-0.148</tspan> (ETH_USDT.swap:<tspan font-weight="bold">0.148</tspan>)</text>
<circle cx="1239.6" cy="513.2" r="2.1" fill="#5c4a10"/>
<text x="1246.6" y="516.9" font-size="10.2" fill="#333" textLength="123.4" lengthAdjust="spacingAndGlyphs">Asset utilization: <tspan font-weight="bold">0.10%</tspan></text>
</svg>

<div style="position:absolute;left:1620.5px;top:756.5px;width:35px;height:35px;border-radius:50%;background:#fff;box-shadow:0 1px 8px rgba(0,0,0,0.13)"></div>
<svg class="t" style="left:1630px;top:766px" width="16" height="16" viewBox="0 0 16 16" fill="none" stroke="#333" stroke-width="1.2"><path d="M1.8 2.3 h12.4 M8 5.2 v8.4 M5.6 7.6 L8 5.2 L10.4 7.6"/></svg>
</div>
</body></html>
